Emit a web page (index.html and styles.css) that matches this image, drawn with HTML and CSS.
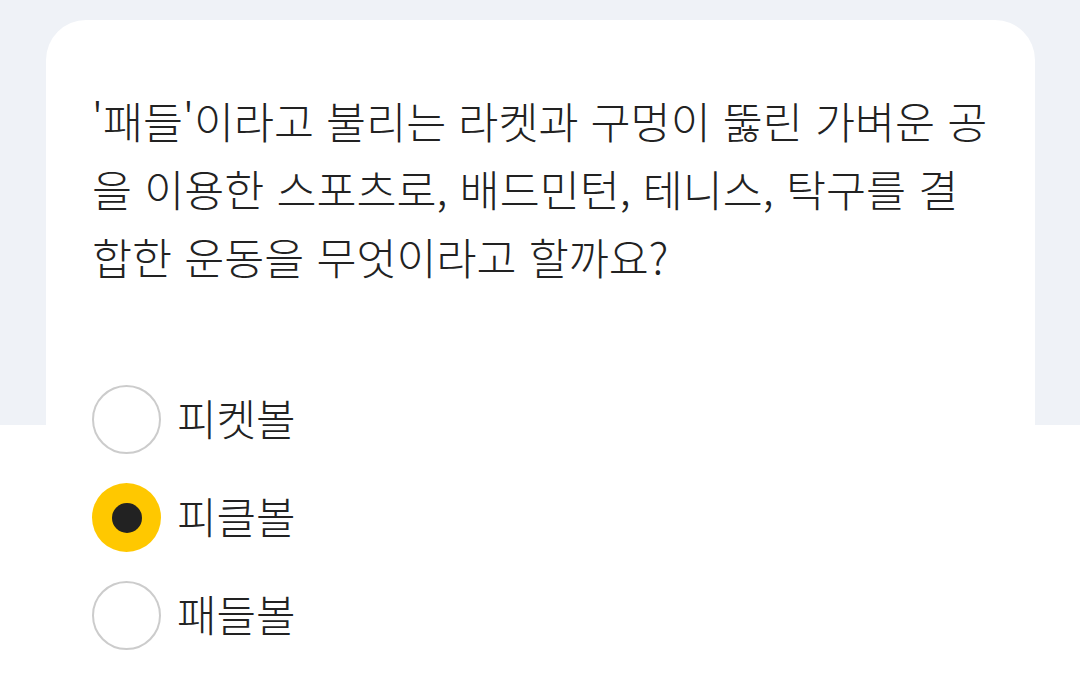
FILE: index.html
```html
<!DOCTYPE html>
<html lang="ko">
<head>
<meta charset="utf-8">
<link rel="stylesheet" href="styles.css">
</head>
<body>
<main class="card">
  <p class="question">'패들'이라고 불리는 라켓과 구멍이 뚫린 가벼운 공<br>을 이용한 스포츠로, 배드민턴, 테니스, 탁구를 결<br>합한 운동을 무엇이라고 할까요?</p>
  <ul class="options">
    <li class="option"><span class="radio"></span><span class="label">피켓볼</span></li>
    <li class="option"><span class="radio checked"></span><span class="label">피클볼</span></li>
    <li class="option"><span class="radio"></span><span class="label">패들볼</span></li>
  </ul>
</main>
</body>
</html>
```
FILE: styles.css
```css
html, body {
  margin: 0;
  padding: 0;
}
body {
  width: 1080px;
  height: 694px;
  overflow: hidden;
  background: linear-gradient(#eff2f7 0, #eff2f7 425px, #ffffff 425px);
  font-family: "Noto Sans CJK KR", "Noto Sans", sans-serif;
  font-weight: 300;
  color: #222222;
}
.card {
  box-sizing: border-box;
  margin: 20px 45px 0 46px;
  background: #ffffff;
  border-radius: 40px 40px 0 0;
  padding: 67px 30px 0 46px;
  height: 674px;
}
.question {
  margin: 0;
  font-size: 43.5px;
  line-height: 68px;
  white-space: nowrap;
}
.options {
  list-style: none;
  margin: 94px 0 0 0;
  padding: 0;
  display: flex;
  flex-direction: column;
  gap: 29px;
}
.option {
  display: flex;
  align-items: center;
  gap: 16px;
  height: 69px;
}
.radio {
  box-sizing: border-box;
  width: 69px;
  height: 69px;
  border-radius: 50%;
  border: 2px solid #cccccc;
  background: #ffffff;
  display: flex;
  align-items: center;
  justify-content: center;
  flex: none;
}
.radio.checked {
  border: none;
  background: #ffc800;
}
.radio.checked::after {
  content: "";
  width: 30px;
  height: 30px;
  border-radius: 50%;
  background: #222222;
}
.label {
  font-size: 43px;
  line-height: 1;
  margin-top: -4px;
}
```
